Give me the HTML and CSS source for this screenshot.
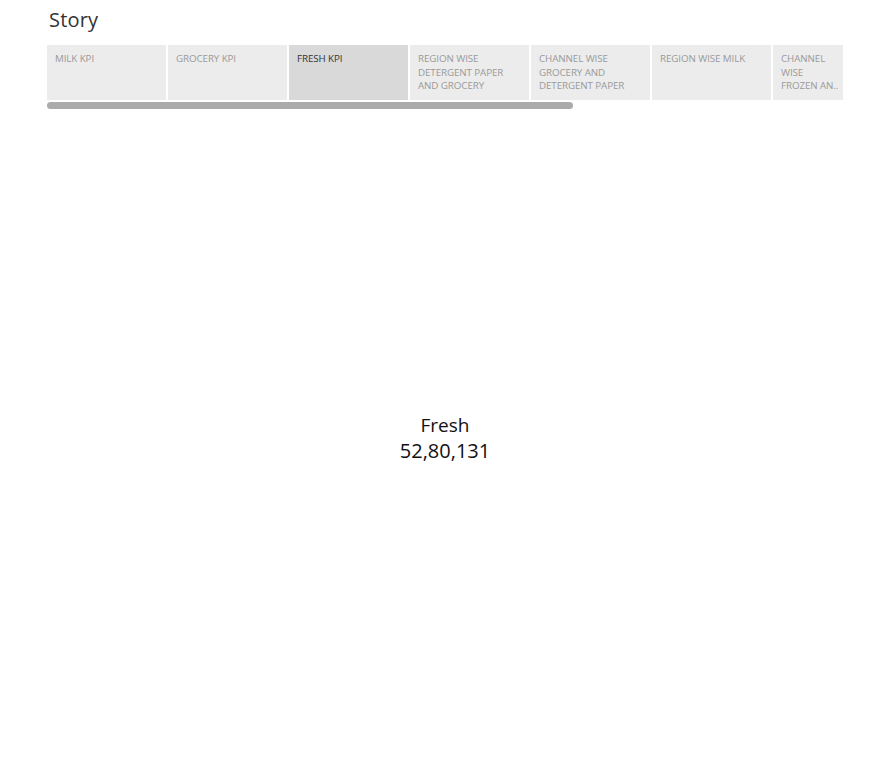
FILE: index.html
```html
<!DOCTYPE html>
<html>
<head>
<meta charset="utf-8">
<link rel="stylesheet" href="styles.css">
</head>
<body>
<div class="story">
  <h1 class="title">Story</h1>
  <div class="nav">
    <div class="tabs">
      <div class="tab">MILK KPI</div>
      <div class="tab">GROCERY KPI</div>
      <div class="tab active">FRESH KPI</div>
      <div class="tab">REGION WISE DETERGENT PAPER AND GROCERY</div>
      <div class="tab">CHANNEL WISE GROCERY AND DETERGENT PAPER</div>
      <div class="tab">REGION WISE MILK</div>
      <div class="tab narrow">CHANNEL WISE FROZEN&nbsp;AN..</div>
    </div>
    <div class="scroll"><div class="thumb"></div></div>
  </div>
  <div class="kpi">
    <div class="kpi-label">Fresh</div>
    <div class="kpi-value">52,80,131</div>
  </div>
</div>
</body>
</html>
```
FILE: styles.css
```css
html, body {
  margin: 0;
  padding: 0;
  background: #ffffff;
}
body {
  font-family: "Open Sans", "Noto Sans", sans-serif;
  width: 877px;
  height: 768px;
  overflow: hidden;
}
.story {
  padding: 7px 0 0 47px;
}
.title {
  margin: 0 0 0 2px;
  font-size: 20px;
  font-weight: 400;
  color: #333333;
  line-height: 26px;
  height: 38px;
  letter-spacing: 0.2px;
}
.nav {
  width: 796px;
  overflow: hidden;
}
.tabs {
  display: flex;
  gap: 2px;
  height: 55px;
}
.tab {
  flex: 0 0 119px;
  box-sizing: border-box;
  background: #ececec;
  padding: 7px 12px 0 8px;
  font-size: 9.8px;
  line-height: 13.5px;
  color: #9a9a9a;
  letter-spacing: -0.1px;
  overflow: hidden;
}
.tab.narrow {
  flex-basis: 70px;
  padding-right: 0;
  white-space: normal;
}
.tab.active {
  background: #d9d9d9;
  color: #333333;
}
.scroll {
  height: 9px;
  padding-top: 2px;
  box-sizing: border-box;
}
.thumb {
  width: 526px;
  height: 7px;
  border-radius: 4px;
  background: #ababab;
}
.kpi {
  margin-top: 303px;
  margin-left: -47px;
  width: 890px;
  text-align: center;
  font-family: "Open Sans", "Noto Sans", sans-serif;
  line-height: 26px;
  color: #111111;
}
.kpi-label {
  font-size: 19px;
}
.kpi-value {
  font-size: 20px;
}
```
